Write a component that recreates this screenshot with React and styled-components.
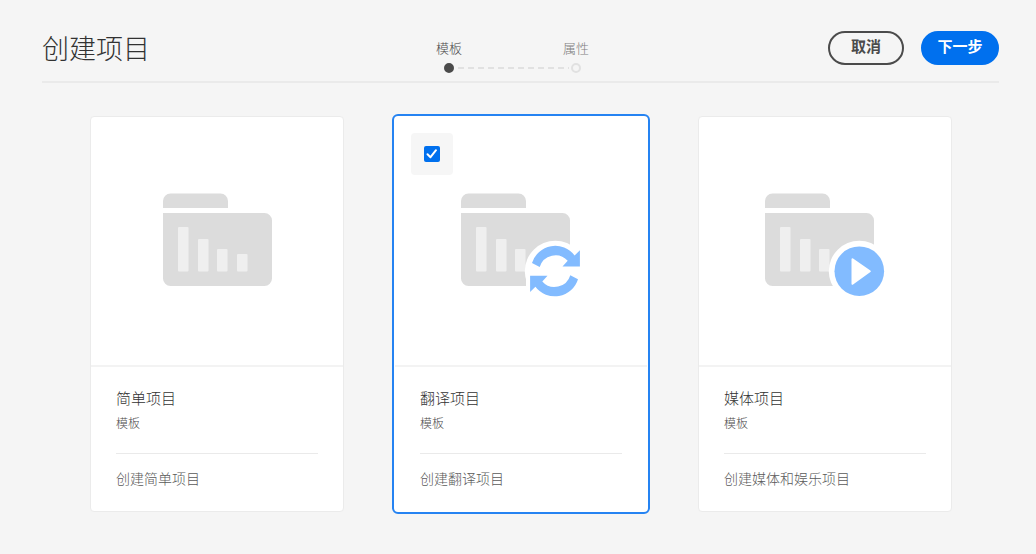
import React from 'react';
import styled, { createGlobalStyle, css } from 'styled-components';

const GlobalStyle = createGlobalStyle`
  *, *::before, *::after { box-sizing: border-box; }
  body {
    margin: 0;
    background: #f5f5f5;
    color: #4b4b4b;
    font-family: "Noto Sans CJK SC", sans-serif;
  }
  h1, h2, p, ol { margin: 0; padding: 0; }
  button, input { font: inherit; }
`;

const Header = styled.header`
  display: grid;
  grid-template-columns: 1fr auto 1fr;
  align-items: start;
  margin: 0 37px 0 42px;
  padding: 31px 0 8px;
  border-bottom: 2px solid #eaeaea;
`;

const PageTitle = styled.h1`
  color: #323232;
  font-size: 27px;
  font-weight: 300;
  line-height: 34px;
`;

const Steps = styled.ol`
  display: flex;
  gap: 99px;
  margin: 8px 16px 0 0;
  list-style: none;
`;

const Step = styled.li`
  position: relative;
  display: flex;
  flex-direction: column;
  align-items: center;
  gap: 6px;
  width: 28px;
  color: ${(p) => (p.$current ? '#4b4b4b' : '#7e7e7e')};
  font-size: 13px;
  font-weight: 300;
  line-height: 18px;
  white-space: nowrap;

  &:not(:last-child)::after {
    content: "";
    position: absolute;
    bottom: 4px;
    left: 23px;
    width: 111px;
    height: 2px;
    background: repeating-linear-gradient(to right, #e1e1e1 0 6px, transparent 6px 10px);
  }
`;

const Dot = styled.span`
  width: 10px;
  height: 10px;
  border: 2px solid ${(p) => (p.$current ? '#4b4b4b' : '#e1e1e1')};
  border-radius: 50%;
  background: ${(p) => (p.$current ? '#4b4b4b' : 'transparent')};
`;

const Actions = styled.div`
  display: flex;
  justify-content: flex-end;
  gap: 17px;
`;

const Button = styled.button`
  min-width: 76px;
  height: 34px;
  padding: 0 14px 4px;
  border: 2px solid #4b4b4b;
  border-radius: 17px;
  background: transparent;
  color: #4b4b4b;
  font-size: 15px;
  font-weight: 700;
  line-height: 26px;
  cursor: pointer;

  ${(p) => p.$primary && css`
    min-width: 78px;
    border-color: #0070ee;
    background: #0070ee;
    color: #ffffff;
  `}
`;

const Templates = styled.main`
  display: grid;
  grid-template-columns: repeat(3, 1fr);
  gap: 50px;
  padding: 33px 84px 40px 90px;
`;

const Card = styled.article`
  position: relative;
  border: 1px solid ${(p) => (p.$selected ? '#ffffff' : '#ebebeb')};
  border-radius: 4px;
  outline: ${(p) => (p.$selected ? '2px solid #2583f2' : 'none')};
  background: #ffffff;
`;

const Preview = styled.div`
  display: flex;
  justify-content: center;
  height: 250px;
  padding-top: 76px;
  border-bottom: 2px solid #f3f3f3;
`;

const Details = styled.div`
  padding: 19px 25px 23px;
`;

const CardTitle = styled.h2`
  color: #323232;
  font-size: 15px;
  font-weight: 300;
  line-height: 24px;
`;

const Kind = styled.p`
  padding: 4px 0 21px;
  border-bottom: 1px solid #eaeaea;
  font-size: 12px;
  font-weight: 300;
  line-height: 18px;
`;

const Description = styled.p`
  padding-top: 14px;
  color: #5a5a5a;
  font-size: 14px;
  font-weight: 300;
  line-height: 20px;
`;

const Selection = styled.label`
  position: absolute;
  top: 16px;
  left: 16px;
  display: grid;
  place-items: center;
  width: 42px;
  height: 42px;
  border-radius: 4px;
  background: #f6f6f6;

  > * { grid-area: 1 / 1; }
`;

const Checkbox = styled.input`
  width: 16px;
  height: 16px;
  margin: 0;
  appearance: none;
  border-radius: 2px;
  background: #0070ee;
`;

const CheckMark = styled.svg`
  z-index: 1;
  pointer-events: none;
`;

const BARS = [
  { x: 15, y: 34 },
  { x: 35, y: 46 },
  { x: 54, y: 56 },
  { x: 74, y: 61 },
];

const ARROW = 'M71 70A24.3 24.3 0 0 1 113.6 62.5L118.9 57.3V73.5H101.5L106.7 67.8A16.4 16.4 0 0 0 78.7 74Z';

function FolderIcon({ badge }) {
  const width = badge ? 120 : 109;
  return (
    <svg width={width} height="104" viewBox={`0 0 ${width} 104`} aria-hidden="true">
      <path fill="#dcdcdc" d="M0 15V8a7.5 7.5 0 0 1 7.500-7.500h50A7.500 7.500 0 0 1 65 8v7z" />
      <path fill="#dcdcdc" d="M0 20h101.500a7.500 7.500 0 0 1 7.500 7.500v58a7.500 7.500 0 0 1-7.500 7.500h-94a7.500 7.500 0 0 1-7.500-7.500z" />
      {BARS.map((bar) => (
        <rect key={bar.x} x={bar.x} y={bar.y} width="10.5" height={78.5 - bar.y} rx="1" fill="#efefef" />
      ))}
      {badge && <circle cx="94.300" cy="78.200" r="30.500" fill="#ffffff" />}
      {badge === 'refresh' && (
        <>
          <path fill="#ffffff" d="M65 82h20v18H65z" />
          <g fill="#82bbff">
            <path d={ARROW} />
            <path d={ARROW} transform="rotate(180 94 78.100)" />
          </g>
        </>
      )}
      {badge === 'play' && (
        <>
          <circle cx="94.300" cy="78.200" r="24.800" fill="#82bbff" />
          <path fill="#ffffff" stroke="#ffffff" strokeWidth="2" strokeLinejoin="round" d="M87.500 66.300L104.800 78.200L87.500 90.800z" />
        </>
      )}
    </svg>
  );
}

const templates = [
  { title: '简单项目', description: '创建简单项目' },
  { title: '翻译项目', description: '创建翻译项目', badge: 'refresh', selected: true },
  { title: '媒体项目', description: '创建媒体和娱乐项目', badge: 'play' },
];

export default function App() {
  return (
    <>
      <GlobalStyle />
      <Header>
        <PageTitle>创建项目</PageTitle>
        <Steps>
          <Step $current aria-current="step">模板<Dot $current /></Step>
          <Step>属性<Dot /></Step>
        </Steps>
        <Actions>
          <Button type="button">取消</Button>
          <Button type="button" $primary>下一步</Button>
        </Actions>
      </Header>
      <Templates>
        {templates.map(({ title, description, badge, selected }) => (
          <Card key={title} $selected={selected}>
            <Preview>
              <FolderIcon badge={badge} />
            </Preview>
            {selected && (
              <Selection>
                <Checkbox type="checkbox" defaultChecked aria-label={title} />
                <CheckMark width="16" height="16" viewBox="0 0 16 16" aria-hidden="true">
                  <path d="M3.500 8.200L6.500 11.200L12 4.200" fill="none" stroke="#ffffff" strokeWidth="2" strokeLinecap="round" strokeLinejoin="round" />
                </CheckMark>
              </Selection>
            )}
            <Details>
              <CardTitle>{title}</CardTitle>
              <Kind>模板</Kind>
              <Description>{description}</Description>
            </Details>
          </Card>
        ))}
      </Templates>
    </>
  );
}
